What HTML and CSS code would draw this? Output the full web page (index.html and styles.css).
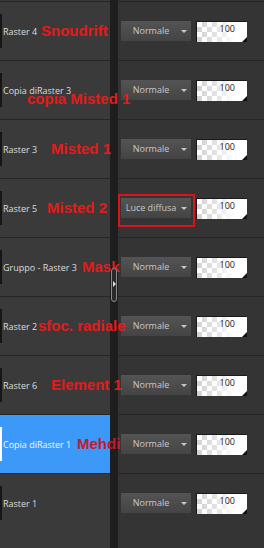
FILE: index.html
```html
<!DOCTYPE html>
<html lang="it">

<head>
    <meta charset="UTF-8">
    <title>Livelli</title>
    <meta name="viewport" content="width=device-width, initial-scale=1.0" />
    <link rel="stylesheet" href="styles.css">
</head>

<body>

    <div class="panel">
        <div class="layer">
            <div class="name"><span class="thumb"></span>Raster 4</div>
            <div class="gutter"></div>
            <div class="props">
                <div class="blend">Normale</div>
                <div class="opacity">100</div>
            </div>
            <span class="note snow">Snoudrift</span>
        </div>

        <div class="layer">
            <div class="name"><span class="thumb"></span>Copia diRaster 3</div>
            <div class="gutter"></div>
            <div class="props">
                <div class="blend">Normale</div>
                <div class="opacity">100</div>
            </div>
            <span class="note copy">copia Misted 1</span>
        </div>

        <div class="layer">
            <div class="name"><span class="thumb"></span>Raster 3</div>
            <div class="gutter"></div>
            <div class="props">
                <div class="blend">Normale</div>
                <div class="opacity">100</div>
            </div>
            <span class="note misted1">Misted 1</span>
        </div>

        <div class="layer">
            <div class="name"><span class="thumb"></span>Raster 5</div>
            <div class="gutter"></div>
            <div class="props">
                <div class="blend">Luce diffusa</div>
                <div class="opacity">100</div>
                <span class="mark"></span>
            </div>
            <span class="note misted2">Misted 2</span>
        </div>

        <div class="layer">
            <div class="name"><span class="thumb"></span>Gruppo - Raster 3</div>
            <div class="gutter"></div>
            <div class="props">
                <div class="blend">Normale</div>
                <div class="opacity">100</div>
            </div>
            <span class="note mask">Mask</span>
        </div>

        <div class="layer">
            <div class="name"><span class="thumb"></span>Raster 2</div>
            <div class="gutter"></div>
            <div class="props">
                <div class="blend">Normale</div>
                <div class="opacity">100</div>
            </div>
            <span class="note radial">sfoc. radiale</span>
        </div>

        <div class="layer">
            <div class="name"><span class="thumb"></span>Raster 6</div>
            <div class="gutter"></div>
            <div class="props">
                <div class="blend">Normale</div>
                <div class="opacity">100</div>
            </div>
            <span class="note element">Element 1</span>
        </div>

        <div class="layer selected">
            <div class="name"><span class="thumb"></span>Copia diRaster 1</div>
            <div class="gutter"></div>
            <div class="props">
                <div class="blend">Normale</div>
                <div class="opacity">100</div>
            </div>
            <span class="note mehdi">Mehdi</span>
        </div>

        <div class="layer">
            <div class="name"><span class="thumb"></span>Raster 1</div>
            <div class="gutter"></div>
            <div class="props">
                <div class="blend">Normale</div>
                <div class="opacity">100</div>
            </div>
        </div>

        <div class="scroll-thumb"></div>
    </div>

</body>

</html>
```

FILE: styles.css
```css
* {
    box-sizing: border-box;
}

body {
    margin: 0;
    padding: 0;
    background-color: #343434;
    font-family: 'Open Sans', 'DejaVu Sans', sans-serif;
}

.panel {
    position: relative;
    width: 264px;
    height: 548px;
    padding-top: 1px;
    background: linear-gradient(to right, #3a3a3a 0 110px, #1e1e1e 110px 118px, #343434 118px);
    overflow: hidden;
}

.layer {
    position: relative;
    display: grid;
    grid-template-columns: 110px 8px 1fr;
    height: 59px;
}

.name,
.props {
    border-top: 1px solid #262626;
}

.layer:last-of-type .name,
.layer:last-of-type .props {
    border-bottom: 1px solid #262626;
    height: 60px;
}

.name {
    display: flex;
    align-items: center;
    gap: 1px;
    color: #dcdcdc;
    font-size: 9px;
    white-space: nowrap;
}

.thumb {
    width: 2px;
    height: 34px;
    background-color: #161616;
}

.selected .name {
    background-color: #3c99f8;
    color: #f4f8ff;
}

.selected .thumb {
    background-color: #ffffff;
}

.props {
    position: relative;
    display: flex;
    align-items: center;
    gap: 5px;
    padding-left: 3px;
}

.blend {
    position: relative;
    width: 70px;
    height: 20px;
    padding-right: 10px;
    background: linear-gradient(#545454, #444444);
    color: #c8c8c8;
    font-size: 9px;
    line-height: 20px;
    text-align: center;
    white-space: nowrap;
}

.blend::after {
    content: "";
    position: absolute;
    right: 4px;
    top: 9px;
    border-left: 3px solid transparent;
    border-right: 3px solid transparent;
    border-top: 3px solid #c8c8c8;
}

.opacity {
    position: relative;
    width: 51px;
    height: 21px;
    padding: 2px 12px 0 0;
    background-color: #ffffff;
    background-image:
        linear-gradient(to right, rgba(255, 255, 255, 0) 0, rgba(255, 255, 255, 0.4) 40%, #ffffff 75%),
        conic-gradient(#d2d2d2 25%, #ffffff 0 50%, #d2d2d2 0 75%, #ffffff 0);
    background-size: 100% 100%, 10px 10px;
    border-top: 1px solid #1a1a1a;
    border-left: 1px solid #1a1a1a;
    color: #222222;
    font-size: 9px;
    line-height: 9px;
    text-align: right;
}

.opacity::after {
    content: "";
    position: absolute;
    right: 0;
    bottom: 0;
    border-left: 5px solid transparent;
    border-bottom: 5px solid #111111;
}

.mark {
    position: absolute;
    left: 0;
    top: 15px;
    width: 77px;
    height: 33px;
    border: 2px solid #d8141c;
}

.note {
    position: absolute;
    top: 22px;
    color: #e31b1b;
    font-family: 'Liberation Sans', Arial, sans-serif;
    font-weight: bold;
    font-size: 15px;
    line-height: 15px;
    white-space: nowrap;
}

.snow { left: 41px; }
.copy { left: 27px; top: 31px; }
.misted1 { left: 51px; }
.misted2 { left: 47px; }
.mask { left: 82px; }
.radial { left: 38px; }
.element { left: 51px; }
.mehdi { left: 77px; color: #c8182c; }

.scroll-thumb {
    position: absolute;
    left: 111px;
    top: 268px;
    width: 6px;
    height: 34px;
    border: 1px solid #8a8a8a;
    border-radius: 3px;
    background-color: #2a2a2a;
}

.scroll-thumb::after {
    content: "";
    position: absolute;
    left: 1px;
    top: 12px;
    border-top: 3px solid transparent;
    border-bottom: 3px solid transparent;
    border-left: 3px solid #dddddd;
}
```
